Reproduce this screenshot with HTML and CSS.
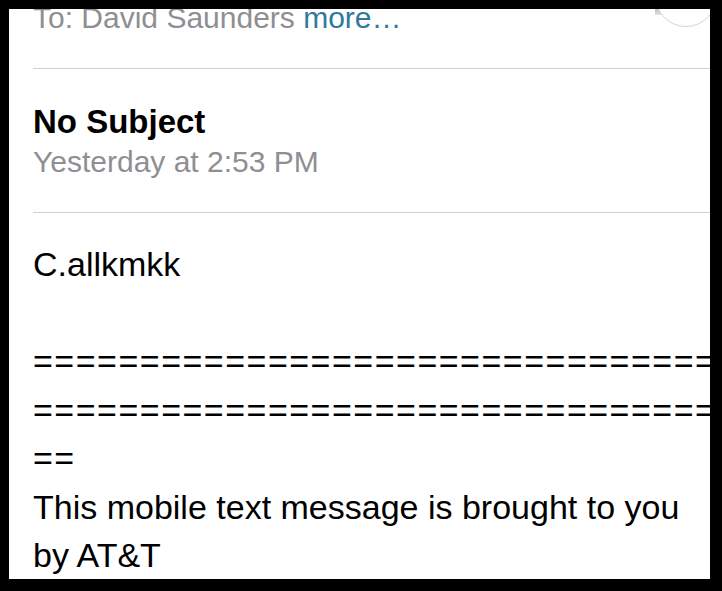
FILE: index.html
```html
<!DOCTYPE html>
<html lang="en">
<head>
  <meta charset="UTF-8" />
  <meta name="viewport" content="width=device-width, initial-scale=1.0" />
  <title>No Subject</title>
  <link rel="stylesheet" href="styles.css">
</head>
<body>
  <div class="screen">
    <div class="avatar-shade"></div>
    <div class="avatar"></div>

    <div class="to-row">To: David Saunders <span class="more">more…</span></div>

    <div class="subject-block">
      <div class="subject">No Subject</div>
      <div class="date">Yesterday at 2:53 PM</div>
    </div>

    <div class="message">
      <div class="line">C.allkmkk</div>
      <div class="line">&nbsp;</div>
      <div class="line rule">==================================================</div>
      <div class="line rule">==================================================</div>
      <div class="line rule">==</div>
      <p class="footer">This mobile text message is brought to you by AT&amp;T</p>
    </div>
  </div>
</body>
</html>
```

FILE: styles.css
```css
body { margin: 0; background: #000; font-family: "Liberation Sans", Arial, sans-serif; }
.screen { position: relative; margin: 9px 12px 0 9px; height: 570px; background: #fff; overflow: hidden; }

.avatar-shade { position: absolute; left: 646px; top: 0; width: 60px; height: 6px; background: linear-gradient(#bcbcbc, #e4e4e4); }
.avatar { position: absolute; left: 646px; top: -44px; width: 60px; height: 60px; border: 1.5px solid #d4d4d4; border-radius: 50%; background: #fff; }

.to-row { margin: -9px 0 0 24px; padding-bottom: 32px; font-size: 30px; line-height: 36px; color: #8e8e93; border-bottom: 1px solid #cfcfd2; white-space: nowrap; }
.more { color: #2f7a9c; }

.subject-block { margin-left: 24px; padding: 33px 0 32px; border-bottom: 1px solid #cfcfd2; }
.subject { font-size: 33px; font-weight: bold; line-height: 40px; color: #000; }
.date { margin-top: 2px; font-size: 30px; line-height: 36px; color: #8e8e93; }

.message { padding: 27px 10px 0 24px; font-size: 34px; line-height: 48.5px; color: #000; }
.line { white-space: nowrap; }
.rule { letter-spacing: 1.5px; }
.footer { margin: 0; }
```
